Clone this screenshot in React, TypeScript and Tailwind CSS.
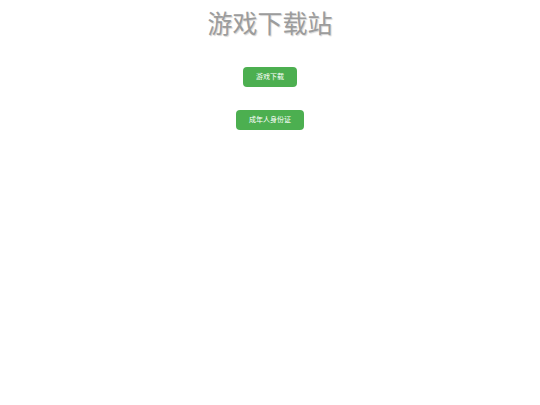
import React from "react";

export default function App() {
  return (
    <div
      className="min-h-[405px] bg-white flex flex-col items-center"
      style={{ fontFamily: '"Liberation Sans", "Noto Sans CJK SC", sans-serif' }}
    >
      <h1 className="mt-[9px] text-[25px] leading-[30px] font-normal text-[#9c9c9c] [text-shadow:1px_1px_1px_#d4d4d4]">
        游戏下载站
      </h1>
      <button className="mt-[28px] h-[20px] px-[13px] rounded-[4px] bg-[#4caf50] text-white text-[7px] leading-[20px]">
        游戏下载
      </button>
      <button className="mt-[23px] h-[20px] px-[13px] rounded-[4px] bg-[#4caf50] text-white text-[7px] leading-[20px]">
        成年人身份证
      </button>
    </div>
  );
}
